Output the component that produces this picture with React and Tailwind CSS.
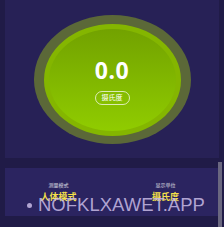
import React from "react";

const App = () => {
  return (
    <div
      className="relative w-[224px] h-[227px] overflow-hidden bg-[#201b47]"
      style={{ fontFamily: '"Noto Sans", "Noto Sans CJK SC", sans-serif' }}
    >
      {/* Gauge panel */}
      <div className="mx-[5px] h-[158px] bg-[#272156] flex justify-center pt-[15px]">
        <div className="w-[157px] h-[129px] rounded-[50%] bg-[#5b6838] flex items-center justify-center">
          <div className="w-[137px] h-[112px] rounded-[50%] border-[5px] border-[#84b600] bg-gradient-to-b from-[#72a200] to-[#90cc00] flex flex-col items-center justify-center">
            <div className="text-white font-bold text-[23px] leading-none mt-[4px] tracking-wide">0.0</div>
            <div className="mt-[9px] px-[6px] h-[14px] rounded-full border border-white/70 text-white text-[7px] leading-[12px]">
              摄氏度
            </div>
          </div>
        </div>
      </div>

      {/* Settings panel */}
      <div className="mx-[5px] mt-[10px] h-[48px] bg-[#2b2460] flex pt-[13px]">
        <div className="flex-1 flex flex-col items-center">
          <div className="text-[5px] leading-[8px] text-white/80">测量模式</div>
          <div className="mt-[3px] text-[9px] leading-[10px] font-bold text-[#f5e04a]">人体模式</div>
        </div>
        <div className="flex-1 flex flex-col items-center">
          <div className="text-[5px] leading-[8px] text-white/80">显示单位</div>
          <div className="mt-[3px] text-[9px] leading-[10px] font-bold text-[#f5e04a]">摄氏度</div>
        </div>
      </div>

      {/* Scrollbar strip */}
      <div className="absolute right-[2px] top-[162px] w-[4px] h-[65px] bg-[#6a6780]" />

      {/* Watermark */}
      <div
        className="absolute left-[27px] top-[196px] flex items-center gap-[6px] text-[#c9bce6]/85 text-[18.5px] leading-none pointer-events-none"
        style={{ fontFamily: '"Liberation Sans", sans-serif' }}
      >
        <span className="w-[5px] h-[5px] rounded-full bg-[#c9bce6]/85" />
        <span>NOFKLXAWET.APP</span>
      </div>
    </div>
  );
};

export default App;
